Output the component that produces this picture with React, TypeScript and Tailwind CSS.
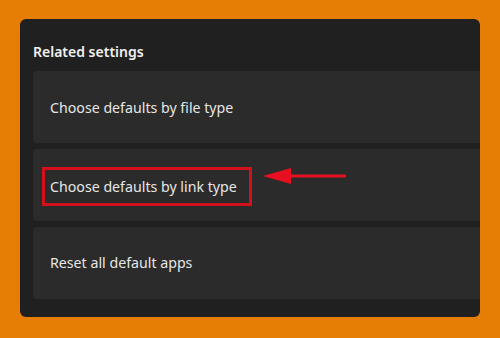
export default function App() {
  return (
    <div className="w-[500px] h-[338px] bg-[#e67e06] pt-[19px] pl-[20px] pr-[20px] pb-[21px] font-['Noto_Sans',sans-serif]">
      <div className="h-full rounded-md bg-[#202020] pl-[13px] flex flex-col overflow-hidden">
        <div className="h-[52px] flex items-end pb-[9px]">
          <span className="text-[14px] font-semibold text-[#f0f0f0]">Related settings</span>
        </div>
        <div className="flex flex-col gap-[6px]">
          <div className="h-[72px] bg-[#2b2b2b] rounded-l flex items-center pl-[17px]">
            <span className="mt-[1px] text-[14.2px] text-[#e6e6e6]">Choose defaults by file type</span>
          </div>
          <div className="h-[72px] bg-[#2b2b2b] rounded-l flex items-center pl-[9px]">
            <span className="mt-[3px] h-[39px] inline-flex items-center border-[3px] border-[#d4101c] pl-[5px] pr-[12px] text-[14.2px] text-[#e6e6e6]">
              Choose defaults by link type
            </span>
            <svg className="ml-[11px] mb-[19px]" width="84" height="18" viewBox="0 0 84 18">
              <polygon points="0,9 28,1 28,17" fill="#e81020" />
              <rect x="26" y="7.5" width="57" height="3" fill="#e81020" />
            </svg>
          </div>
          <div className="h-[72px] bg-[#2b2b2b] rounded-l flex items-center pl-[17px]">
            <span className="text-[14.2px] text-[#e6e6e6]">Reset all default apps</span>
          </div>
        </div>
      </div>
    </div>
  )
}
